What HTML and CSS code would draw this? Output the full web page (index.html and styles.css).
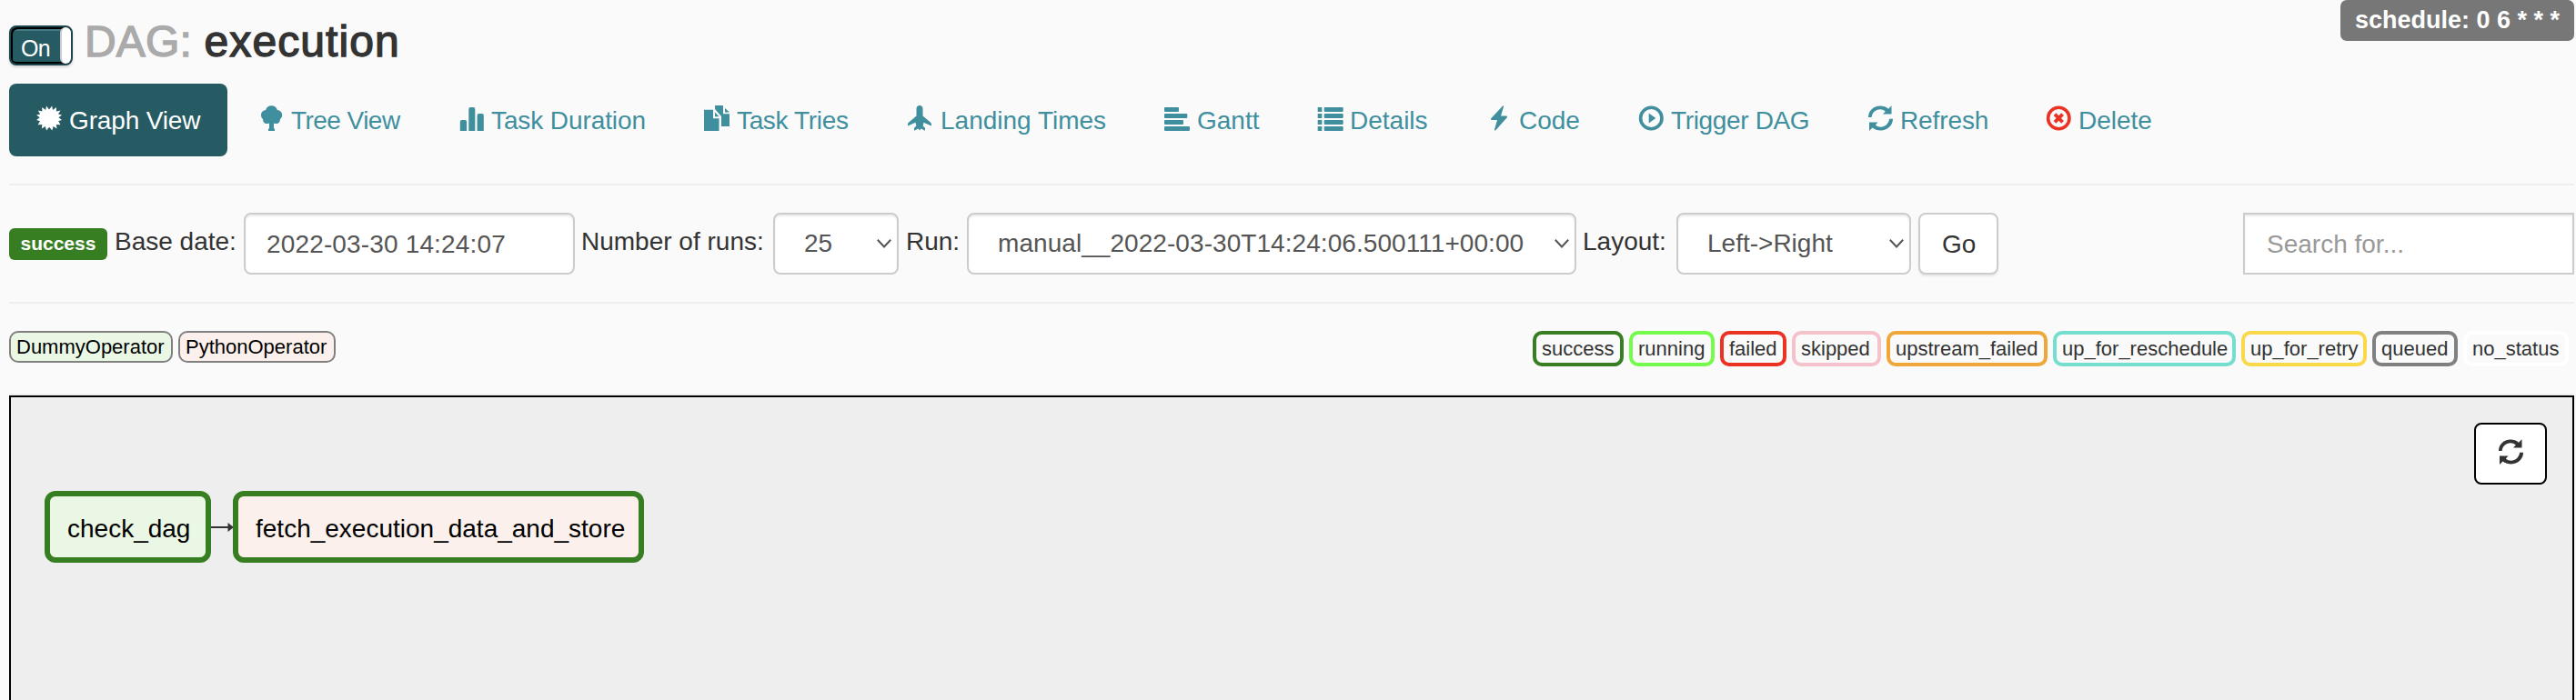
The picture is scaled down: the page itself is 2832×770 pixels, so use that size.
FILE: index.html
```html
<!DOCTYPE html>
<html lang="en">
<head>
<meta charset="utf-8">
<title>DAG: execution</title>
<link rel="stylesheet" href="styles.css">
</head>
<body>
<svg class="defs" width="0" height="0" aria-hidden="true">
  <symbol id="refresh" viewBox="0 0 28 28">
    <path d="M1 13C1 6 6.500 .5 14 .5c3.500 0 6.500 1 9 3.200L26.500.300V9.600H17L19.800 6.500C18 5 16 4.300 14 4.300 9 4.300 5 8 4.600 13z"/>
    <path d="M28 14.800C28 22 22 27.500 14.500 27.500c-3.500 0-6.500-1-9-3L2 28V18.500h9.500L8.800 21.500C10.500 23 12.500 23.700 14.500 23.700c5 0 9-3.700 9.600-8.900z"/>
  </symbol>
</svg>
<header class="head">
  <div class="title">
    <div class="toggle"><span class="toggle-on">On</span><span class="knob"></span></div>
    <h3><span class="muted">DAG:</span> <span class="name">execution</span></h3>
  </div>
  <span class="schedule">schedule: 0 6 * * *</span>
</header>
<nav class="tabs">
  <a class="tab active w1"><svg class="icon" viewBox="0 0 28 28"><path d="M14 4.500 17.200.500 18 4.900 22 1.900 21.900 6.400 26.500 5.500 24 9.500 28 10.500 24.500 13.200 28 16 24.200 17.300 26.500 21.200 21.900 20.900 22.500 25.500 18.600 23 17.300 27.500 14.200 23.800 11 27.500 9.800 23 5.800 25.500 6.300 20.900 1.700 21.200 4 17.300.100 16 3.700 13.200.100 10.500 4.200 9.500 1.700 5.500 6.400 6.400 6.200 1.900 10.200 4.900 11 .500z"/></svg><span class="tx">Graph View</span></a>
  <a class="tab w2"><svg class="icon" viewBox="0 0 28 28"><path d="M14.500.300c3.200 0 5.700 2 6.300 4.700 3.200.300 5.400 2.700 5.400 5.500 0 2-1 3.600-2.300 4.500.200 3-1.800 5-4.400 5-1 0-1.800-.2-2.500-.6v6.100h1V28H11v-2.500h1v-6.100c-.7.400-1.500.6-2.500.6-2.700 0-4.600-2-4.400-5C3.800 14.100 3 12.500 3 10.500 3 7.700 5.200 5.300 8.200 5 8.800 2.300 11.300.300 14.500.300z"/></svg><span class="tx">Tree View</span></a>
  <a class="tab w3"><svg class="icon" viewBox="0 0 28 28"><path d="M1.800 28V18q0-2 2-2h3.300q2 0 2 2v10zM11.300 28V4q0-2 2-2h3q2 0 2 2v24zM20.600 28V11q0-2 2-2h3.200q2 0 2 2v17z"/></svg><span class="tx">Task Duration</span></a>
  <a class="tab w4"><svg class="icon" viewBox="0 0 28 28"><path d="M0 4.700H10V14.200H16.500V28H0zM12 7.500 16.500 12.200H12zM12 0H21V9.300H28V23H19V12L12 4zM23 3 28 7.500H23z"/></svg><span class="tx">Task Tries</span></a>
  <a class="tab w5"><svg class="icon" viewBox="0 0 28 28"><path d="M13 0c2.200 0 3.500 1.600 3.500 3.800V11.500L24.800 18.500q1.200 1 1.200 2.300V22.500L17.500 18.800 16.700 22.500 19 24.800V27.700L14.500 25.500 13 27.500 11.500 25.500 7 27.700V24.800L9.300 22.500 8.500 18.800 0 22.500V20.800Q0 19.500 1.200 18.500L9.500 11.500V3.800C9.500 1.600 10.800 0 13 0z"/></svg><span class="tx">Landing Times</span></a>
  <a class="tab w6"><svg class="icon" viewBox="0 0 28 28"><rect y="2" width="16" height="5" rx="1"/><rect y="9" width="25.300" height="5" rx="1"/><rect y="16" width="21" height="5" rx="1"/><rect y="23" width="28" height="5" rx="1"/></svg><span class="tx">Gantt</span></a>
  <a class="tab w7"><svg class="icon" viewBox="0 0 28 28"><path d="M.7 2h4.600v5H.7zM.7 9h4.600v5H.7zM.7 16h4.600v5H.7zM.7 23h4.600v5H.7z"/><rect x="7.700" y="2" width="21" height="5" rx="1"/><rect x="7.700" y="9" width="21" height="5" rx="1"/><rect x="7.700" y="16" width="21" height="5" rx="1"/><rect x="7.700" y="23" width="21" height="5" rx="1"/></svg><span class="tx">Details</span></a>
  <a class="tab w8"><svg class="icon" viewBox="0 0 28 28"><path d="M18.300.300 5 14.600Q4.600 16 6 16H12L9 26.500Q9 28.300 10.300 27.300L23 13Q23.300 11.500 22 11.500H16L19 1.500Q19.300 0 18.300.300z"/></svg><span class="tx">Code</span></a>
  <a class="tab w9"><svg class="icon" viewBox="0 0 28 28"><circle cx="14.300" cy="14" r="11.700" fill="none" stroke="currentColor" stroke-width="3.600"/><path d="M11.700 8.500 19.300 14 11.700 19.500z"/></svg><span class="tx">Trigger DAG</span></a>
  <a class="tab w10"><svg class="icon"><use href="#refresh"/></svg><span class="tx">Refresh</span></a>
  <a class="tab w11"><svg class="icon danger" viewBox="0 0 28 28"><circle cx="14.300" cy="14" r="11.700" fill="none" stroke="currentColor" stroke-width="3.600"/><path d="M10 9.700 18.600 18.300M18.600 9.700 10 18.300" fill="none" stroke="currentColor" stroke-width="3.800"/></svg><span class="tx">Delete</span></a>
</nav>
<section class="filters">
  <form class="form">
    <span class="badge">success</span>
    <label class="l1">Base date:</label>
    <div class="control date"><span>2022-03-30 14:24:07</span></div>
    <label class="l2">Number of runs:</label>
    <div class="control select runs"><span>25</span><svg class="caret" viewBox="0 0 16 10"><path d="M.8.800 8 8.500 15.200.800"/></svg></div>
    <label class="l3">Run:</label>
    <div class="control select run"><span class="runid">manual__2022-03-30T14:24:06.500111+00:00</span><svg class="caret" viewBox="0 0 16 10"><path d="M.8.800 8 8.500 15.200.800"/></svg></div>
    <label class="l4">Layout:</label>
    <div class="control select layout"><span>Left-&gt;Right</span><svg class="caret" viewBox="0 0 16 10"><path d="M.8.800 8 8.500 15.200.800"/></svg></div>
    <div class="control go">Go</div>
  </form>
  <div class="control search">Search for...</div>
</section>
<section class="legend">
  <div class="ops"><span class="op dummy">DummyOperator</span><span class="op python">PythonOperator</span></div>
  <div class="states">
    <span class="state s1">success</span><span class="state s2">running</span><span class="state s3">failed</span><span class="state s4">skipped</span><span class="state s5">upstream_failed</span><span class="state s6">up_for_reschedule</span><span class="state s7">up_for_retry</span><span class="state s8">queued</span><span class="state s9">no_status</span>
  </div>
</section>
<main class="graph">
  <div class="flow">
    <div class="node check">check_dag</div>
    <svg class="edge" viewBox="0 0 24 12"><path d="M0 6H20" stroke="#333" stroke-width="2"/><path d="M18.500 1 25 6 18.500 11z" fill="#333"/></svg>
    <div class="node fetch"><span>fetch_execution_data_and_store</span></div>
  </div>
  <div class="reload"><svg class="icon"><use href="#refresh"/></svg></div>
</main>
</body>
</html>
```
FILE: styles.css
```css
* { box-sizing: border-box; }
body {
  margin: 0;
  padding: 0 2px 0 10px;
  height: 770px;
  overflow: hidden;
  display: flex;
  flex-direction: column;
  background: #fafafa;
  color: #333;
  font: 28px/40px "Liberation Sans", Arial, sans-serif;
  white-space: nowrap;
}
.defs { display: block; position: absolute; }
.head { height: 92px; display: flex; justify-content: space-between; align-items: flex-start; }
.title { display: flex; padding-top: 18px; gap: 13px; }
.toggle {
  width: 70px; height: 44px; margin-top: 10px;
  display: flex; justify-content: space-between;
  border: 2px solid #1c454c; border-radius: 8px;
  background: #265b64;
  box-shadow: inset 2px 2px 0 #000, inset 0 -2px 0 #000, inset 0 4px 0 #467a82, 0 2px 3px rgba(0,0,0,.15);
}
.toggle-on { padding: 3px 0 0 11px; font-size: 25px; line-height: 40px; letter-spacing: -.8px; color: #fff; }
.knob { width: 12px; height: 40px; border-radius: 6px; background: #fff; border-left: 2px solid #ccc; }
h3 { margin: 0; font-size: 48px; line-height: 55px; font-weight: 400; -webkit-text-stroke: 1.4px currentColor; }
.muted { color: #aaa; letter-spacing: .2px; }
.name { letter-spacing: 1.1px; }
.schedule {
  height: 45px; width: 257px; padding: 0 16px;
  background: #777; color: #fff; border-radius: 7px;
  font-size: 27px; font-weight: 700; line-height: 44px;
}
.tabs { display: flex; gap: 4px; height: 80px; color: #408f9e; }
.tab { display: flex; gap: 8px; padding: 20px 30px; border-radius: 8px; }
.tab.active { background: #265b64; color: #fff; }
.tx { padding-top: 1px; }
.icon { width: 28px; height: 28px; margin-top: 4px; flex: none; fill: currentColor; overflow: visible; }
.danger { color: #ea3323; }
.w1 { width: 240px; letter-spacing: -.15px; }
.w2 { width: 216px; letter-spacing: -.55px; }
.w3 { width: 266px; letter-spacing: -.1px; }
.w4 { width: 220px; letter-spacing: -.35px; }
.w5 { width: 278px; }
.w6 { width: 164px; }
.w7 { width: 182px; }
.w8 { width: 163px; }
.w9 { width: 248px; letter-spacing: -.35px; }
.w10 { width: 192px; letter-spacing: -.1px; }
.w11 { width: 180px; }
.filters {
  margin-top: 30px; height: 132px; padding: 30px 0;
  display: flex; justify-content: space-between;
  border-top: 2px solid #eee; border-bottom: 2px solid #eee;
}
.form { display: flex; }
.badge {
  width: 108px; height: 35px; margin: 17px 8px 0 0; padding-left: 12.500px;
  background: #377e22; color: #fff; border-radius: 6px;
  font-size: 21px; font-weight: 700; line-height: 34px;
}
label { padding-top: 12px; }
.l1 { width: 142px; }
.l2 { width: 218px; padding-left: 7px; }
.l3 { width: 75px; padding-left: 8px; }
.l4 { width: 110px; padding-left: 7px; }
.control {
  height: 68px; padding: 0 24px; line-height: 66px;
  background: #fff; color: #555;
  border: 2px solid #ccc; border-radius: 8px;
  box-shadow: inset 0 2px 2px rgba(0,0,0,.075);
}
.date { width: 364px; padding-left: 23px; letter-spacing: .15px; }
.select { display: flex; justify-content: space-between; align-items: center; padding: 0 6px 0 32px; }
.caret { width: 16px; height: 10px; fill: none; stroke: #555; stroke-width: 2; }
.runs { width: 138px; }
.run { width: 670px; }
.runid { letter-spacing: .06px; }
.layout { width: 258px; margin-right: 8px; }
.go { width: 88px; color: #333; box-shadow: 0 2px 2px rgba(0,0,0,.08); }
.search { width: 364px; border-radius: 0; color: #999; }
.legend { height: 99px; padding-top: 30px; display: flex; justify-content: space-between; font-size: 22px; }
.ops { display: flex; gap: 6px; }
.op { height: 35px; padding: 0 6px; border: 2px solid #808080; border-radius: 10px; line-height: 31px; color: #000; }
.dummy { width: 180px; background: #e9f7e4; }
.python { width: 173px; background: #fbf0ec; }
.states { display: flex; gap: 6px; padding-right: 6px; }
.state { height: 39px; padding: 0 6px; border: 4px solid; border-radius: 10px; line-height: 32px; -webkit-text-fill-color: #333; }
.s1 { width: 100px; color: #377e22; }
.s2 { width: 94px; color: #75fb4c; }
.s3 { width: 73px; color: #ea3323; }
.s4 { width: 98px; color: #f5c2cb; }
.s5 { width: 177px; color: #f0a73a; }
.s6 { width: 201px; color: #75dece; }
.s7 { width: 138px; color: #f9d849; }
.s8 { width: 94px; color: #808080; }
.s9 { width: 116px; color: #fff; }
.graph {
  margin-top: 2px; flex: 1; display: flex; justify-content: space-between;
  background: #eee; border: 2px solid #000; border-bottom: 0;
  box-shadow: 0 -2px 0 #f0f0f0; color: #000;
}
.flow { display: flex; align-items: flex-start; padding: 103px 0 0 37px; }
.node { height: 79px; padding: 0 19px; border: 6px solid #377e22; border-radius: 12px; line-height: 71px; }
.check { width: 183px; background: #e9f7e4; }
.fetch { width: 452px; background: #fbf0ec; }
.edge { width: 24px; height: 12px; margin-top: 34px; overflow: visible; }
.reload {
  width: 80px; height: 68px; margin: 28px 28px 0 0;
  display: flex; justify-content: center; padding-top: 12px;
  background: #fff; color: #333; border: 2px solid #000; border-radius: 8px;
}
```
